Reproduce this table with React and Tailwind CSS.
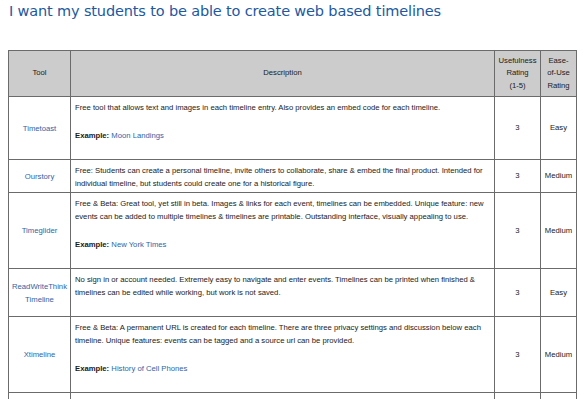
import React from "react";

const rows = [
  {
    tool: "Timetoast",
    desc: "Free tool that allows text and images in each timeline entry. Also provides an embed code for each timeline.",
    example: "Moon Landings",
    rating: "3",
    ease: "Easy",
  },
  {
    tool: "Ourstory",
    desc: "Free: Students can create a personal timeline, invite others to collaborate, share & embed the final product. Intended for individual timeline, but students could create one for a historical figure.",
    rating: "3",
    ease: "Medium",
  },
  {
    tool: "Timeglider",
    desc: "Free & Beta: Great tool, yet still in beta. Images & links for each event, timelines can be embedded. Unique feature: new events can be added to multiple timelines & timelines are printable. Outstanding interface, visually appealing to use.",
    example: "New York Times",
    rating: "3",
    ease: "Medium",
  },
  {
    tool: "ReadWriteThink Timeline",
    desc: "No sign in or account needed. Extremely easy to navigate and enter events. Timelines can be printed when finished & timelines can be edited while working, but work is not saved.",
    trailing: true,
    rating: "3",
    ease: "Easy",
  },
  {
    tool: "Xtimeline",
    desc: "Free & Beta: A permanent URL is created for each timeline. There are three privacy settings and discussion below each timeline. Unique features: events can be tagged and a source url can be provided.",
    example: "History of Cell Phones",
    rating: "3",
    ease: "Medium",
  },
];

const cell = "border border-[#6b6b6b] align-middle";

export default function App() {
  return (
    <div className="min-h-screen w-full bg-white pl-[8px] pt-[2px]">
      {/* Page title */}
      <h1 className="pl-[1px] font-['DejaVu_Sans',Verdana,sans-serif] text-[14.5px] leading-[18px] tracking-[-0.15px] font-normal text-[#22589f]">
        I want my students to be able to create web based timelines
      </h1>

      <table className="mt-[30px] w-[568px] table-fixed border-collapse font-['Liberation_Sans',Arial,sans-serif] text-[7.7px] text-[#1a1a1a]">
        <colgroup>
          <col className="w-[62px]" />
          <col className="w-[424px]" />
          <col className="w-[46px]" />
          <col className="w-[36px]" />
        </colgroup>
        <thead>
          <tr className="bg-[#cccccc] leading-[12.5px]">
            <th className={`${cell} h-[46px] font-normal`}>Tool</th>
            <th className={`${cell} font-normal`}>Description</th>
            <th className={`${cell} font-normal`}>
              Usefulness
              <br />
              Rating
              <br />
              (1-5)
            </th>
            <th className={`${cell} font-normal`}>
              Ease-
              <br />
              of-Use
              <br />
              Rating
            </th>
          </tr>
        </thead>
        <tbody>
          {rows.map((r) => (
            <tr key={r.tool}>
              <td className={`${cell} px-[2px] text-center leading-[13px] text-[#2f64a8]`}>
                {r.tool}
              </td>
              <td className={`${cell} px-[4px] pt-[4px] pb-[2px] leading-[13px]`}>
                <div>{r.desc}</div>
                {r.example && (
                  <div className="mt-[15px]">
                    <span className="font-bold">Example:</span>{" "}
                    <span className="text-[#2f64a8]">{r.example}</span>
                  </div>
                )}
                {(r.example || r.trailing) && <div className="h-[15px]" />}
              </td>
              <td className={`${cell} text-center`}>{r.rating}</td>
              <td className={`${cell} text-center`}>{r.ease}</td>
            </tr>
          ))}
          <tr>
            <td className={`${cell} h-[40px]`} />
            <td className={cell} />
            <td className={cell} />
            <td className={cell} />
          </tr>
        </tbody>
      </table>
    </div>
  );
}
